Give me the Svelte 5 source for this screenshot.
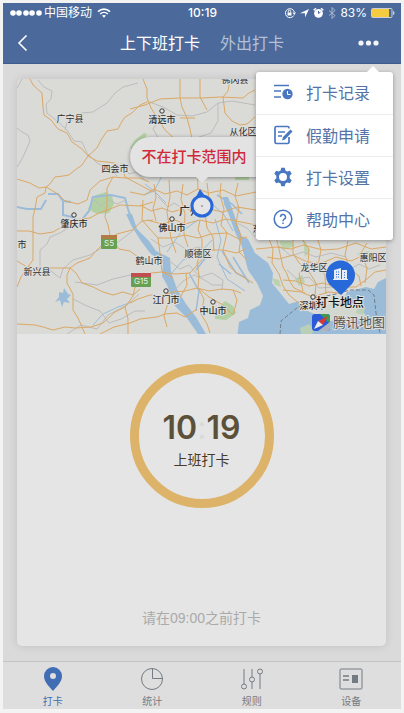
<script>
const menu = [
    { id: 'records', title: '打卡记录' },
    { id: 'leave', title: '假勤申请' },
    { id: 'settings', title: '打卡设置' },
    { id: 'help', title: '帮助中心' },
];
const tabs = [
    { id: 'punch', title: '打卡' },
    { id: 'stats', title: '统计' },
    { id: 'rules', title: '规则' },
    { id: 'device', title: '设备' },
];
const places = [
    { name: '广宁县', x: 53, y: 43 },
    { name: '清远市', x: 145, y: 44, city: true },
    { name: '佛冈县', x: 218, y: 4 },
    { name: '从化区', x: 226, y: 56 },
    { name: '四会市', x: 98, y: 93 },
    { name: '肇庆市', x: 57, y: 148, city: true },
    { name: '市', x: 5, y: 169 },
    { name: '新兴县', x: 20, y: 196 },
    { name: '鹤山市', x: 132, y: 185 },
    { name: '佛山市', x: 155, y: 152, city: true },
    { name: '顺德区', x: 181, y: 178 },
    { name: '江门市', x: 149, y: 224, city: true },
    { name: '中山市', x: 196, y: 235, city: true },
    { name: '东莞市', x: 249, y: 153 },
    { name: '龙华区', x: 297, y: 192 },
    { name: '惠阳区', x: 356, y: 182 },
    { name: '深圳市', x: 296, y: 230, city: true },
];
const minorRoads = [
    'M121 4L106 8 98 14 90 24 76 33 65 34 58 40 50 43 48 51',
    'M21 1L27 8 35 12 34 20 29 25 30 34 40 42 50 51 57 62 65 63 70 74 80 84 94 91 100 97',
    'M0 49L5 53 11 56 13 62 6 78 0 88M5 0L0 9',
    'M23 189V171L30 165 33 158 43 154 56 146 62 140',
    'M30 189L43 199 46 190 56 181 73 176 83 170 100 164 118 150',
    'M58 203L80 206 96 200 113 196 125 201 134 195',
    'M56 220L70 227 83 232 92 244 104 240 118 232 128 232',
    'M50 255L64 246 80 250 91 236 110 226 122 215',
    'M130 22L146 28 160 36 175 37 190 33 201 24 215 22 238 26',
    'M201 24V42L194 54 182 58M143 39L136 50 142 60',
    'M141 118L151 128 157 124 165 129 178 126 182 132',
    'M134 160L146 168 158 163 170 171 182 168 196 178',
    'M151 181L163 190 172 186 183 198 195 194 206 201 205 211',
    'M156 213L166 202 177 196 186 200 195 206 205 206',
    'M216 142L230 149 238 158M262 167L274 177 286 173 299 178 314 174 329 178',
    'M270 191L280 200 292 198 302 209 316 208M330 192L342 185 352 190 363 186',
    'M74 119L84 127 92 121 100 125 109 121M104 84L112 95 119 93 128 101',
];
const roads = [
    'M13 0L16 6 25 14 26 28 27 36 34 41 41 50 50 54 55 63 65 70 71 77 80 82 90 83 98 84 106 91 108 98 123 106 136 113',
    'M130 23L123 26 115 34 108 38 104 44 101 50 90 52 84 61 80 69 71 77 65 86 58 91 52 96 46 97 38 98 32 106 29 108 28 114 20 118 18 130 16 138 16 181 10 189 4 198 0 208',
    'M0 100L13 104 22 109 29 108 41 115 48 122 61 125 70 121 73 111 83 102 96 98 108 99 123 99 132 103',
    'M96 98L90 109 90 126 88 138 91 146 93 156 102 170 113 172 121 178 132 182',
    'M0 152L12 152 23 155 36 153 48 146 56 141 73 139 82 134 93 130 103 126 123 127 136 123',
    'M0 182L10 188 30 189 53 189 60 184 73 179 78 173 83 168 91 160 100 155 115 151 125 142 136 141',
    'M53 189L50 196 50 204 56 215 56 231 61 239 65 248 68 255',
    'M53 189L59 194 65 204 76 208 86 213 96 216 106 213 116 216 123 210',
    'M0 245L18 246 26 248 36 251 48 248 58 249 74 248 86 244 98 233 108 228 116 217 118 208 130 205',
    'M108 228L111 240 111 255M83 255L97 248 113 244 123 240 140 238 148 235 160 234 168 238 180 230',
    'M126 0L130 10 130 19 134 29 148 51 160 62',
    'M113 30L128 26 143 20 163 19 185 19 203 18 226 19 232 14 238 11',
    'M163 0L163 19 165 28 170 39 173 50 175 60 180 82 181 110',
    'M163 39H178M183 0V18L190 31M213 0L211 12 206 18 208 34 215 42 223 46 230 45 238 38',
    'M126 121L125 141 132 149 141 159 143 174 145 193 156 199',
    'M113 113L127 116 137 110 148 115 160 112 170 116 181 110 192 114 206 111 219 117 239 113',
    'M123 126L134 132 145 129 155 133 169 129 180 134 192 130 206 133 220 128 239 131',
    'M130 141L145 145 158 141 168 145 183 141 196 144 209 140 239 146',
    'M141 159L155 159 168 156 181 159 194 155 210 154 222 160 230 158',
    'M137 105L139 118 136 130 139 142M152 101L153 118 150 133 154 159 159 174',
    'M166 105L164 120 168 135 167 155 171 168M190 104L192 120 188 133 190 149 196 158 197 172',
    'M204 104L203 116 207 130 204 146 210 154 206 171 213 188 220 194 236 204',
    'M221 104L218 117 222 129 219 144 224 157 222 173 230 181',
    'M134 194L145 193 158 195 173 194 181 185 193 171 206 171 220 174 228 170',
    'M113 224L121 220 133 216 143 217 156 213 168 212 180 209 192 212 205 210 216 211 224 214',
    'M183 141L181 151 185 160 185 171 180 184 182 196 181 209 187 220 184 235 190 245 193 254',
    'M181 209L192 218 206 226 216 236 220 221 216 211M169 194L170 206 164 217 151 224 147 237 150 248',
    'M239 170L250 169 259 168 274 170 286 166 306 171 321 170 339 164 354 170 369 168',
    'M252 160L256 170 255 184 262 195 266 207 272 216 284 226',
    'M259 158L262 170 266 188 270 195 272 201 277 209 288 214',
    'M276 160L276 174 282 184 291 191 299 204 298 216M300 158L304 171 301 186 308 196 309 215',
    'M250 178L262 180 276 176 290 183 305 184 319 178 334 182 347 176 369 183',
    'M266 201L279 202 292 207 306 204 320 208 339 208 350 200 358 193 369 191',
    'M266 211L284 213 296 218 311 213 322 214M331 162L328 176 333 190 342 197 344 207',
    'M350 164L344 174 350 189 348 204M285 160L292 170 291 184 282 195 286 212',
];
let selected = $state('punch');
let section = $state('in');
</script>

{#snippet menuIcon(id)}
  <svg class="menu-icon" viewBox="0 0 20 20" aria-hidden="true">
    {#if id === 'records'}
      <path d="M1 3.500h15M1 9h7M1 15h7" stroke-width="1.700" />
      <circle cx="14.500" cy="12" r="5.200" class="solid" />
      <path d="M14.500 9v3.500h3" class="knock" />
    {:else if id === 'leave'}
      <path d="M16 3.500V3a1.500 1.500 0 0 0-1.500-1.500h-11A1.500 1.500 0 0 0 2 3v14a1.500 1.500 0 0 0 1.500 1.500h11A1.500 1.500 0 0 0 16 17v-5" stroke-width="1.700" />
      <path d="M5 7h7M5 11h4" stroke-width="1.700" />
      <path d="M17.500 4.500l2 2-7.500 8-3 1 1-3.500z" class="solid" />
    {:else if id === 'settings'}
      <path fill-rule="evenodd" class="solid" d="M8.200.8h3.600l.6 2.600 1.900 1.100 2.600-.8 1.800 3.100-2 1.900v2.600l2 1.900-1.800 3.100-2.600-.8-1.900 1.100-.6 2.600H8.200l-.6-2.600-1.900-1.100-2.600.8-1.800-3.100 2-1.900V8.700l-2-1.900 1.800-3.100 2.600.8 1.900-1.100zM10 6a4 4 0 1 0 0 8 4 4 0 0 0 0-8z" />
    {:else}
      <circle cx="10" cy="10" r="8.800" stroke-width="1.600" />
      <path d="M7.500 8a2.500 2.500 0 1 1 3.700 2.200c-.8.500-1.200.9-1.200 2M10 13.500v1.500" stroke-width="1.500" />
    {/if}
  </svg>
{/snippet}

{#snippet tabIcon(id)}
  <svg class="tab-icon" viewBox="0 0 24 24" aria-hidden="true">
    {#if id === 'punch'}
      <path fill-rule="evenodd" class="solid" d="M12 0a9 9 0 0 0-9 9c0 6 5 10 9 15 4-5 9-9 9-15a9 9 0 0 0-9-9zm0 6a3 3 0 1 1 0 6 3 3 0 0 1 0-6z" />
    {:else if id === 'stats'}
      <circle cx="12" cy="12" r="10.500" />
      <path d="M12.500 1.500v10h10" />
    {:else if id === 'rules'}
      <path d="M4 2v15M12 2v8M12 15v7M20 7v15" />
      <circle cx="4" cy="19.500" r="2.500" />
      <circle cx="12" cy="12.500" r="2.500" />
      <circle cx="20" cy="4.500" r="2.500" />
    {:else}
      <rect x="1" y="2" width="22" height="20" rx="1" />
      <path d="M4 9h6M4 13h6" stroke-width="1.500" />
      <rect x="13" y="8" width="6" height="8" class="solid" />
    {/if}
  </svg>
{/snippet}

<div class="screen">
  <header>
    <div class="status">
      <div class="carrier">
        <svg width="32" height="8" viewBox="0 0 32 8" fill="#fff" aria-hidden="true">
          {#each [3, 9, 16, 22, 29] as cx}
            <circle {cx} cy="4" r="2.800" />
          {/each}
        </svg>
        <span>中国移动</span>
        <svg class="wifi" width="14" height="10" viewBox="0 0 14 10" fill="none" stroke="#fff" stroke-width="1.600" aria-hidden="true">
          <path d="M1 3.600c3.500-3.300 8.500-3.300 12 0M3.200 6c2.200-2 5.400-2 7.600 0" />
          <path d="M5 7.600c1.200-.9 2.800-.9 4 0L7 9.800z" fill="#fff" stroke="none" />
        </svg>
      </div>
      <span class="clock">10:19</span>
      <div class="system">
        <svg width="12" height="12" viewBox="0 0 12 12" fill="none" stroke="#fff" aria-hidden="true">
          <path d="M9.800 8.500A4.500 4.500 0 1 1 10.300 5" />
          <path d="M8.500 5.500h3.500l-1.700 2.500z" fill="#fff" stroke="none" />
          <path d="M3.500 5.500h4v3h-4z" fill="#fff" stroke="none" />
          <path d="M4.300 5.500V4.400a1.200 1.200 0 0 1 2.400 0v1.100" />
        </svg>
        <svg width="9" height="10" viewBox="0 0 9 10" fill="#fff" aria-hidden="true">
          <path d="M9 1L5 9.500V5.200H0z" />
        </svg>
        <svg width="11" height="12" viewBox="0 0 11 12" aria-hidden="true">
          <circle cx="5.500" cy="6.300" r="4.400" fill="#fff" />
          <path d="M.7 3.300L3 1.300M10.300 3.300L8 1.300" stroke="#fff" stroke-width="1.500" />
          <path d="M5.500 4v2.500l2-1.500" fill="none" stroke="#4b6a9b" />
        </svg>
        <svg width="8" height="12" viewBox="0 0 8 12" fill="none" stroke="#a8b7d0" aria-hidden="true">
          <path d="M1 3.500l6 5L4 11.500V.5l3 3-6 5" />
        </svg>
        <span class="percent">83%</span>
        <svg width="24" height="10" viewBox="0 0 24 10" aria-hidden="true">
          <rect x=".5" y=".5" width="20.500" height="9" rx="1" fill="#4b6a9b" stroke="#c8cfdb" />
          <rect x="1" y="1" width="17" height="8" fill="#f5cc3f" />
          <path d="M22 3c2 .5 2 3.500 0 4z" fill="#c8cfdb" />
        </svg>
      </div>
    </div>
    <nav class="top">
      <button class="back" aria-label="返回">
        <svg width="11" height="18" viewBox="0 0 11 18" fill="none" stroke="#fff" stroke-width="1.600" aria-hidden="true">
          <path d="M9.500 1.500L2 9l7.500 7.500" />
        </svg>
      </button>
      <div class="sections">
        <button class:active={section === 'in'} onclick={() => (section = 'in')}>上下班打卡</button>
        <button class:active={section === 'out'} onclick={() => (section = 'out')}>外出打卡</button>
      </div>
      <button class="more" aria-label="更多">
        <svg width="21" height="6" viewBox="0 0 21 6" fill="#f2f4f8" aria-hidden="true">
          <circle cx="3" cy="3" r="2.600" /><circle cx="10.500" cy="3" r="2.600" /><circle cx="18" cy="3" r="2.600" />
        </svg>
      </button>
    </nav>
    <div class="menu">
      {#each menu as item}
        <button class="menu-item">
          {@render menuIcon(item.id)}
          {item.title}
        </button>
      {/each}
    </div>
  </header>

  <main>
    <section class="card">
      <div class="map">
        <svg class="canvas" viewBox="0 0 369 255" role="img" aria-label="地图">
          <rect width="369" height="255" fill="#dadad7" />
          <g fill="#b2d0a3">
            <path d="M71 130l8-14 10-3 6 4 2 8-5 9-12 1z" />
            <path d="M113 69l5-8 9-7 3 1-5 10-8 8zM218 98h14v3h-14zM198 232l10-10 8 5 3 7-10 7-11-1z" />
            <path d="M262 162l12 0 4 5-12 4zM340 174l12-2 4 6-10 3zM286 160l7 12-5 6zM318 188l8-3 3 7-8 4zM278 200l7-4 3 7-6 4zM255 199l7 2 2 7-6-2z" opacity=".8" />
          </g>
          <!-- sea and estuary -->
          <g fill="#9bbcd9">
            <path d="M222 156l9 4 7 14 13 10 5 10-1 10 9 11 8 10 10-3 4 8 9 4 5 2 8-4 5-6 9 1 5-7 3-7 19-5 8 2 4-7 8-4v60H220l2-16 9-4 2-8 10-5 3-9-6-13-9-13-5-19z" />
            <path d="M109 135l6 0 5 15 12 12 7 10 14 7 1 14 6 17 9 15 10 13 10 17h-8l-11-16-12-12-8-21-5-9 1-13-13-10-9-12-9-14z" />
            <path d="M206 118l5 0 6 17 5 15 5 14-3 2-6-13-6-17-5-11z" />
            <path d="M42 213l4 1 1-5 4 6 3 1-4 4 3 4-6-1-2 5-2-7-5 2 4-5z" />
          </g>
          <!-- islands -->
          <path d="M303 229l10-4 14-3 6 4 8-6 6 5-5 5 7 6-6 4-9-2-3 6-12-3-9 2-8-7z" fill="#d2d8cf" />
          <path d="M341 227l7 2-2 7-7-2zM283 249l9-4 6 6-4 4h-10z" fill="#b9cfb6" />
          <g class="river">
            <path d="M31 115h10l5 7 8 1M0 128l10 2 14 0 5-9M46 123v13l9 2 8 5 9-11 4-14 18-2 14 3 3 11 4 12" stroke-width="2" />
            <path d="M128 105l10 8 11 11M145 97l-8 15-10 4M181 141l-17 12-14 20M193 123l14 13 9 16M154 195l12-14 16-6 13-14M198 140l6 21-4 17 10 22 18 12M76 246l10-11 15-7 14-5" stroke-width="1" />
            <path d="M225 135l-10-10-15-9M172 194l10 18-3 20M190 177l-11 14M214 195l-12-10M205 172l14 22 10 5M216 178l16 26" stroke-width="1.500" />
          </g>
          <g class="minor">
            {#each minorRoads as d}
              <path {d} />
            {/each}
          </g>
          <g class="road">
            {#each roads as d}
              <path {d} />
            {/each}
          </g>
          <path d="M263 255l1-13 17-14 18-9 20-4 14-4 18 0 6 5 2 18 4 20" class="border" />
          <g class="shield">
            <rect x="84" y="156" width="16" height="14" rx="1" fill="#68a052" /><rect x="84" y="156" width="16" height="4" fill="#b37b46" />
            <text x="92" y="167">S5</text>
            <rect x="114" y="194" width="20" height="14" rx="1" fill="#68a052" /><rect x="114" y="194" width="20" height="4" fill="#c24f50" />
            <text x="124" y="205">G15</text>
          </g>
          {#each places as place}
            {#if place.city}
              <circle cx={place.x} cy={place.y - 12} r="2.200" class="dot" />
            {/if}
            <text x={place.x} y={place.y} class="place" class:city={place.city}>{place.name}</text>
          {/each}
          <text x="173" y="136" class="place capital">广州</text>
          <!-- current position -->
          <path d="M183 110l-5 10h12z" fill="#2869da" />
          <circle cx="185" cy="127" r="10" fill="#e4e4e6" stroke="#2869da" stroke-width="3" />
          <circle cx="185" cy="127" r="1" fill="#9c9c9c" />
          <!-- office pin -->
          <path d="M324 216l-10-9a14.500 14.500 0 1 1 19 0z" fill="#2869da" />
          <path d="M317 191l7-2v11h-7zM325 191h5v9h-5zM316 200h15v1h-15z" fill="#e7edf7" />
          <path d="M319 193h1M321 193h1M319 195.500h1M321 195.500h1M319 198h1M321 198h1M327 193.500h1M327 196h1M327 198.500h1" stroke="#2869da" />
          <text x="323" y="228" class="spot">打卡地点</text>
          <g>
            <rect x="295" y="235" width="18" height="17" rx="3" fill="#2b5ad8" />
            <path d="M303 235h7a3 3 0 0 1 3 3v7z" fill="#3e9c52" />
            <path d="M313 243v6a3 3 0 0 1-3 3h-9z" fill="#aeb5ba" />
            <path d="M311 237l-5 9-5-4z" fill="#d53a3a" /><path d="M297 250l4-8 5 4z" fill="#eee" />
          </g>
          <text x="342" y="248" class="vendor">腾讯地图</text>
        </svg>
        <div class="bubble">不在打卡范围内</div>
      </div>
      <button class="punch">
        <span class="time">10<i>:</i>19</span>
        <span class="action">上班打卡</span>
      </button>
      <p class="hint">请在09:00之前打卡</p>
    </section>
  </main>

  <nav class="tabs">
    {#each tabs as item}
      <button class="tab" class:active={selected === item.id} onclick={() => (selected = item.id)}>
        {@render tabIcon(item.id)}
        {item.title}
      </button>
    {/each}
  </nav>
</div>

<style>
:global(body) {
  background: #f3f3f3;
}

.screen {
  display: flex;
  flex-direction: column;
  box-sizing: border-box;
  min-height: 100vh;
  padding: 3px 3px 4px;
  font-family: Inter, "Noto Sans CJK SC", sans-serif;
}

button {
  margin: 0;
  padding: 0;
  border: 0;
  background: none;
  color: inherit;
  font: inherit;
  cursor: pointer;
}

svg {
  display: block;
  flex: none;
}

header {
  position: relative;
  background: #4b6a9b;
  color: #fff;
  border-bottom: 1px solid #3f5b89;
}

.status {
  display: grid;
  grid-template-columns: 1fr auto 1fr;
  align-items: center;
  height: 20px;
  padding: 0 6px 0 7px;
  font-size: 12px;
  line-height: 20px;
}

.carrier,
.system {
  display: flex;
  align-items: center;
  gap: 2px;
}

.wifi {
  margin-left: 3px;
}

.system {
  justify-content: flex-end;
  gap: 4px;
}

.clock {
  font-weight: 500;
}

.top {
  display: grid;
  grid-template-columns: 1fr auto 1fr;
  align-items: center;
  height: 40px;
  padding: 0 14px;
  font-size: 16px;
  line-height: 24px;
}

.sections {
  display: flex;
  gap: 20px;
}

.sections button {
  color: #b3c0d5;
}

.sections .active {
  color: #fff;
}

.more {
  justify-self: end;
  padding: 8px;
}

.back {
  justify-self: start;
}

.menu {
  position: absolute;
  z-index: 2;
  top: 69px;
  right: 8px;
  width: 137px;
  border-radius: 3px;
  background: #fff;
  color: #5474a8;
  box-shadow: 0 1px 4px rgba(0, 0, 0, 0.35);
}

.menu::before {
  content: "";
  position: absolute;
  top: -6px;
  right: 14px;
  border: 6px solid transparent;
  border-top: 0;
  border-bottom-color: #fff;
}

.menu-item {
  display: flex;
  align-items: center;
  gap: 13px;
  box-sizing: border-box;
  width: 100%;
  height: 42px;
  padding: 0 0 2px 17px;
  font-size: 16px;
}

.menu-item + .menu-item {
  border-top: 1px solid #ececec;
}

.menu-icon {
  width: 20px;
  height: 20px;
  fill: none;
  stroke: #4a78c0;
}

.menu-icon .solid {
  fill: #4a78c0;
  stroke: none;
}

.menu-icon .knock {
  stroke: #fff;
}

main {
  display: flex;
  flex: 1;
  padding: 15px 15px 15px 14px;
  background: #dadada;
}

.card {
  display: flex;
  flex: 1;
  flex-direction: column;
  align-items: center;
  min-width: 0;
  border-radius: 5px;
  background: #e5e5e5;
  box-shadow: 0 0 10px rgba(0, 0, 0, 0.12);
}

.map {
  position: relative;
  width: 100%;
}

.canvas {
  width: 100%;
  height: auto;
  border-radius: 5px 5px 0 0;
}

.canvas text {
  text-anchor: middle;
}

.river {
  fill: none;
  stroke: #9bbcd9;
}

.minor {
  fill: none;
  stroke: #bcbcbc;
}

.road {
  fill: none;
  stroke: #dba865;
  stroke-linejoin: round;
}

.border {
  fill: none;
  stroke: #777d84;
  stroke-dasharray: 4 2;
}

.shield text {
  font-size: 8px;
  fill: #e8efe5;
}

.dot {
  fill: #e8e8e8;
  stroke: #333;
}

.place {
  font-size: 9px;
  fill: #2b2b2b;
  stroke: #dededb;
  stroke-width: 2px;
  paint-order: stroke;
}

.city {
  font-weight: 500;
}

.capital {
  font-size: 11px;
  font-weight: 500;
}

.spot {
  font-size: 12px;
  font-weight: 500;
  fill: #111;
  stroke: #dededb;
  stroke-width: 2px;
  paint-order: stroke;
}

.vendor {
  font-size: 13px;
  fill: #555;
  stroke: #dededb;
  stroke-width: 2px;
  paint-order: stroke;
}

.bubble {
  position: absolute;
  top: 58px;
  left: 50%;
  box-sizing: border-box;
  width: 144px;
  padding-left: 12px;
  transform: translateX(-50%);
  border-radius: 20px;
  background: #e3e3e3;
  box-shadow: 0 1px 4px rgba(0, 0, 0, 0.4);
  color: #d02838;
  font-size: 15px;
  font-weight: 500;
  line-height: 40px;
  white-space: nowrap;
}

.bubble::after {
  content: "";
  position: absolute;
  top: 100%;
  left: 50%;
  margin-left: -6px;
  border: 6px solid transparent;
  border-bottom: 0;
  border-top-color: #e3e3e3;
}

.punch {
  display: flex;
  flex-direction: column;
  align-items: center;
  justify-content: center;
  box-sizing: border-box;
  width: 144px;
  height: 144px;
  margin-top: 30px;
  padding-top: 8px;
  border: 9px solid #dcb368;
  border-radius: 50%;
  color: #5c5039;
}

.time {
  font-size: 32px;
  font-weight: 600;
  line-height: 40px;
}

.time i {
  color: #dadada;
  font-style: normal;
  font-weight: 400;
}

.action {
  color: #463b26;
  font-size: 14px;
  line-height: 24px;
}

.hint {
  margin: auto 0 16px;
  color: #aaa;
  font-family: "Liberation Sans", "Noto Sans CJK SC", sans-serif;
  font-size: 14px;
  line-height: 24px;
}

.tabs {
  display: flex;
  border-top: 1px solid #c3c3c3;
  background: #dedede;
}

.tab {
  display: flex;
  flex: 1;
  flex-direction: column;
  align-items: center;
  gap: 3px;
  padding: 5px 0 1px;
  color: #747b84;
  font-size: 10px;
  line-height: 14px;
}

.tab.active {
  color: #416db4;
}

.tab-icon {
  width: 24px;
  height: 24px;
  fill: none;
  stroke: currentColor;
}

.tab-icon .solid {
  fill: currentColor;
  stroke: none;
}
</style>
